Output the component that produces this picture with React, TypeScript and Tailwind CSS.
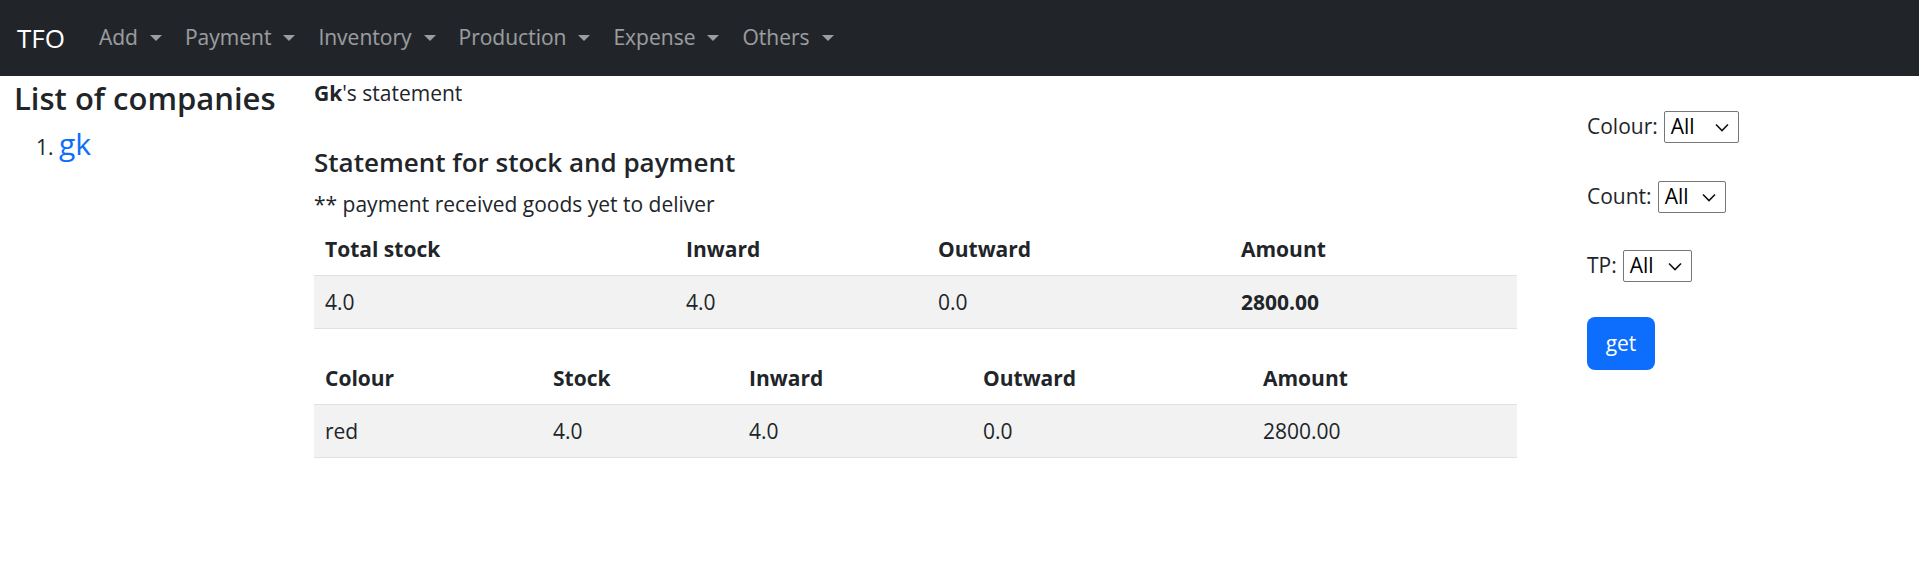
import React from 'react';

const navItems = ['Add', 'Payment', 'Inventory', 'Production', 'Expense', 'Others'];

const Caret = () => (
  <span className="ml-[12px] inline-block h-0 w-0 border-x-[6px] border-t-[6px] border-x-transparent border-t-current" />
);

const Chevron = () => (
  <svg width="14" height="9" viewBox="0 0 14 9" fill="none">
    <path d="M1 1.5 L7 7.5 L13 1.5" stroke="#111" strokeWidth="1.6" />
  </svg>
);

const FakeSelect: React.FC<{ w: string }> = ({ w }) => (
  <div className={`flex h-[32px] ${w} items-center justify-between rounded-[2px] border border-[#767676] bg-white pl-[6px] pr-[9px] text-[21px] text-black`}>
    <span>All</span>
    <Chevron />
  </div>
);

const headCls = 'px-[11px] py-[10px] text-left font-bold';
const cellCls = 'px-[11px] py-[10px]';

export default function App() {
  return (
    <div className="min-h-[569px] bg-white text-[#212529]" style={{ fontFamily: '"Open Sans", "Noto Sans", sans-serif' }}>
      <nav className="flex h-[76px] items-center bg-[#212529] pl-[17px]">
        <span className="text-[26px] text-white">TFO</span>
        <div className="ml-[34px] flex items-center gap-[23px] text-[21px] text-white/55">
          {navItems.map((n) => (
            <div key={n} className="flex items-center">
              <span>{n}</span>
              <Caret />
            </div>
          ))}
        </div>
      </nav>

      <div className="flex">
        {/* left column */}
        <div className="w-[314px] shrink-0 pl-[14px] pt-[2px]">
          <h4 className="text-[31px] leading-[40px] font-semibold">List of companies</h4>
          <ol className="mt-[8px] list-decimal pl-[45px] text-[21px]">
            <li className="leading-[36px]">
              <a className="text-[30px] font-medium text-[#0d6efd]">gk</a>
            </li>
          </ol>
        </div>

        {/* main column */}
        <div className="w-[1203px] shrink-0 pt-[2px]">
          <p className="text-[21px] leading-[30px]">
            <b>Gk</b>'s statement
          </p>
          <h5 className="mt-[39px] text-[26px] leading-[30px] font-semibold">Statement for stock and payment</h5>
          <p className="mt-[12px] text-[21px] leading-[30px]">** payment received goods yet to deliver</p>

          <table className="mt-[4px] w-full table-fixed border-collapse text-[21px] leading-[32px]">
            <colgroup>
              <col className="w-[361px]" />
              <col className="w-[252px]" />
              <col className="w-[303px]" />
              <col />
            </colgroup>
            <thead>
              <tr className="border-b border-[#dee2e6]">
                <th className={headCls}>Total stock</th>
                <th className={headCls}>Inward</th>
                <th className={headCls}>Outward</th>
                <th className={headCls}>Amount</th>
              </tr>
            </thead>
            <tbody>
              <tr className="border-b border-[#dee2e6] bg-[#f2f2f2]">
                <td className={cellCls}>4.0</td>
                <td className={cellCls}>4.0</td>
                <td className={cellCls}>0.0</td>
                <td className={`${cellCls} font-bold`}>2800.00</td>
              </tr>
            </tbody>
          </table>

          <table className="mt-[23px] w-full table-fixed border-collapse text-[21px] leading-[32px]">
            <colgroup>
              <col className="w-[228px]" />
              <col className="w-[196px]" />
              <col className="w-[234px]" />
              <col className="w-[280px]" />
              <col />
            </colgroup>
            <thead>
              <tr className="border-b border-[#dee2e6]">
                <th className={headCls}>Colour</th>
                <th className={headCls}>Stock</th>
                <th className={headCls}>Inward</th>
                <th className={headCls}>Outward</th>
                <th className={headCls}>Amount</th>
              </tr>
            </thead>
            <tbody>
              <tr className="border-b border-[#dee2e6] bg-[#f2f2f2]">
                <td className={cellCls}>red</td>
                <td className={cellCls}>4.0</td>
                <td className={cellCls}>4.0</td>
                <td className={cellCls}>0.0</td>
                <td className={cellCls}>2800.00</td>
              </tr>
            </tbody>
          </table>
        </div>

        {/* filter column */}
        <div className="ml-[70px] flex flex-col items-start pt-[35px] text-[21px]">
          <div className="flex items-center gap-[6px]">
            <span>Colour:</span>
            <FakeSelect w="w-[75px]" />
          </div>
          <div className="mt-[38px] flex items-center gap-[6px]">
            <span>Count:</span>
            <FakeSelect w="w-[68px]" />
          </div>
          <div className="mt-[37px] flex items-center gap-[6px]">
            <span>TP:</span>
            <FakeSelect w="w-[69px]" />
          </div>
          <button className="mt-[35px] h-[53px] w-[68px] rounded-[8px] bg-[#0d6efd] text-[21px] text-white">get</button>
        </div>
      </div>
    </div>
  );
}
